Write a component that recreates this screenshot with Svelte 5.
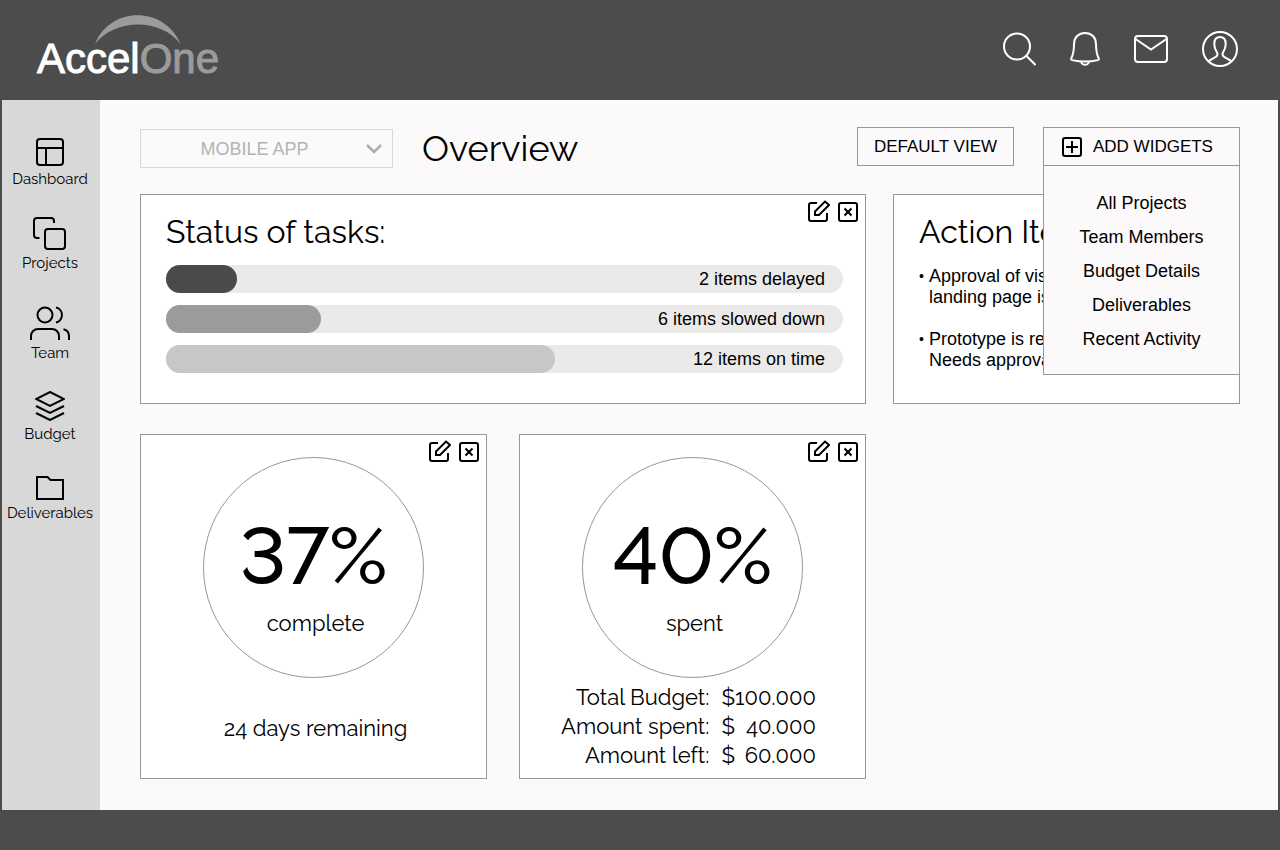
<script lang="ts">
	let project = 'MOBILE APP';
	let menuOpen = true;

	const nav = ['Dashboard', 'Projects', 'Team', 'Budget', 'Deliverables'];
	const widgets = ['All Projects', 'Team Members', 'Budget Details', 'Deliverables', 'Recent Activity'];

	const tasks = [
		{ label: '2 items delayed', width: 10.5, color: '#4a4a4a' },
		{ label: '6 items slowed down', width: 22.9, color: '#9b9b9b' },
		{ label: '12 items on time', width: 57.5, color: '#c7c7c9' }
	];

	const budget = [
		{ label: 'Total Budget:', amount: '100.000' },
		{ label: 'Amount spent:', amount: '40.000' },
		{ label: 'Amount left:', amount: '60.000' }
	];
</script>

{#snippet tools()}
	<div class="tools">
		<button aria-label="Edit widget">
			<svg width="22" height="22" viewBox="0 0 22 22">
				<path d="M9 3H3a2 2 0 0 0-2 2v14a2 2 0 0 0 2 2h14a2 2 0 0 0 2-2v-6" />
				<path d="M7 11.5 17 1.5l4 3.5-10 10H7z" />
			</svg>
		</button>
		<button aria-label="Remove widget">
			<svg width="20" height="20" viewBox="0 0 20 20">
				<rect x="1" y="1" width="18" height="18" rx="2" />
				<path d="M6.5 6.5l7 7M13.5 6.5l-7 7" />
			</svg>
		</button>
	</div>
{/snippet}

<div class="page">
	<header>
		<a class="logo" href="/">
			<svg class="arc" width="86" height="29" viewBox="0 0 86 29">
				<path d="M0 29C15-9.500 70-9.500 85.500 29C66 3 20 3 0 29z" />
			</svg>
			<span class="accel">Accel</span><span class="one">One</span>
		</a>
		<div class="actions">
			<button aria-label="Search">
				<svg width="34" height="34" viewBox="0 0 34 34">
					<circle cx="15" cy="14.500" r="13" />
					<path d="M24 23.500 33.500 33" />
				</svg>
			</button>
			<button aria-label="Notifications">
				<svg width="30" height="34" viewBox="0 0 30 34">
					<path d="M15 1C8.500 1 4 5.500 4 12c0 8-.8 10.500-2.600 14-.5 1.200-.3 1.800.8 2.100C6 29 10.500 29.600 15 29.600s9-.6 12.800-1.500c1.100-.3 1.300-.9.8-2.100C26.800 22.500 26 20 26 12 26 5.500 21.500 1 15 1z" />
					<path d="M11 30c.8 2 2 2.800 4 2.800s3.200-.8 4-2.800" />
				</svg>
			</button>
			<button aria-label="Messages">
				<svg width="34" height="28" viewBox="0 0 34 28">
					<rect x="1" y="1" width="32" height="26" rx="3" />
					<path d="M1.500 4 17 14.500 32.500 4" />
				</svg>
			</button>
			<button aria-label="Account">
				<svg width="36" height="36" viewBox="0 0 36 36">
					<circle cx="18" cy="18" r="17" />
					<path d="M6.500 30.500c2-2.300 5-3.200 7-4.300 1.800-1 2.300-2.400 1.800-4.200-.5-1.700-3-3.500-3-9C12.300 8.500 14.500 6 18 6s5.700 2.500 5.700 7c0 5.500-2.500 7.300-3 9-.5 1.800 0 3.200 1.800 4.200 2 1.100 5 2 7 4.300" />
				</svg>
			</button>
		</div>
	</header>

	<div class="body">
		<nav>
			{#each nav as item}
				<a href="#{item.toLowerCase()}">
					{#if item === 'Dashboard'}
						<svg width="28" height="28" viewBox="0 0 28 28">
							<rect x="1" y="1" width="26" height="26" rx="3" />
							<path d="M1 10h26M10 10v17" />
						</svg>
					{:else if item === 'Projects'}
						<svg width="34" height="33" viewBox="0 0 34 33">
							<rect x="12" y="12" width="20" height="20" rx="3" />
							<path d="M21 6V4a3 3 0 0 0-3-3H4a3 3 0 0 0-3 3v14a3 3 0 0 0 3 3h2.500" />
						</svg>
					{:else if item === 'Team'}
						<svg width="40" height="39" viewBox="0 0 40 39">
							<circle cx="15" cy="14" r="7.500" />
							<path d="M1 39v-4a7 7 0 0 1 7-7h14a7 7 0 0 1 7 7v4" />
							<path d="M26 6.500a7.700 7.700 0 0 1 0 15M33.500 28.300a7 7 0 0 1 5.500 6.700v4" />
						</svg>
					{:else if item === 'Budget'}
						<svg width="30" height="30" viewBox="0 0 30 30">
							<path d="M15 1l14 7-14 7L1 8zM1 15l14 7 14-7M1 22l14 7 14-7" />
						</svg>
					{:else}
						<svg width="28" height="28" viewBox="0 0 28 28">
							<path d="M1 5h10.500l3 3H27v19H1z" />
						</svg>
					{/if}
					<span>{item}</span>
				</a>
			{/each}
		</nav>

		<main>
			<div class="toolbar">
				<div class="picker">
					<select aria-label="Project" bind:value={project}>
						<option>MOBILE APP</option>
					</select>
					<svg width="18" height="12" viewBox="0 0 18 12"><path d="M2 2l7 7 7-7" /></svg>
				</div>
				<h1>Overview</h1>
				<button class="box default">DEFAULT VIEW</button>
				<div class="add">
					<button class="box" aria-expanded={menuOpen} on:click={() => (menuOpen = !menuOpen)}>
						<svg width="20" height="20" viewBox="0 0 20 20">
							<rect x="1" y="1" width="18" height="18" rx="2" />
							<path d="M4 10h12M10 4v12" />
						</svg>
						ADD WIDGETS
					</button>
					{#if menuOpen}
						<ul class="menu">
							{#each widgets as widget}
								<li><button>{widget}</button></li>
							{/each}
						</ul>
					{/if}
				</div>
			</div>

			<div class="board">
				<div class="left">
					<section class="card status">
						{@render tools()}
						<h2>Status of tasks:</h2>
						{#each tasks as task}
							<div class="bar">
								<div class="fill" style="width: {task.width}%; background: {task.color}"></div>
								<span>{task.label}</span>
							</div>
						{/each}
					</section>

					<section class="card metric">
						{@render tools()}
						<div class="circle">
							<strong>37%</strong>
							<span>complete</span>
						</div>
						<p>24 days remaining</p>
					</section>

					<section class="card metric">
						{@render tools()}
						<div class="circle">
							<strong>40%</strong>
							<span>spent</span>
						</div>
						<table>
							<tbody>
								{#each budget as row}
									<tr>
										<th scope="row">{row.label}</th>
										<td>$</td>
										<td>{row.amount}</td>
									</tr>
								{/each}
							</tbody>
						</table>
					</section>
				</div>

				<section class="card items">
					<h2>Action Items:</h2>
					<ul>
						<li>Approval of visuals<br />landing page is due</li>
						<li>Prototype is ready<br />Needs approval</li>
					</ul>
				</section>
			</div>
		</main>
	</div>
	<footer></footer>
</div>

<style>
	:global(body) {
		margin: 0;
	}

	.page {
		--dark: #4c4c4c;
		--line: #979797;
		--bg: #fbf9fa;
		display: flex;
		flex-direction: column;
		min-height: 100vh;
		background: var(--dark);
		color: #000;
		font-family: 'Liberation Sans', Arial, sans-serif;
		font-size: 18px;
	}

	.page * {
		box-sizing: border-box;
	}

	svg {
		display: block;
		flex-shrink: 0;
		fill: none;
		stroke: currentColor;
		stroke-width: 2;
	}

	button {
		padding: 0;
		border: 0;
		background: none;
		color: inherit;
		font: inherit;
		cursor: pointer;
	}

	a {
		color: inherit;
		text-decoration: none;
	}

	ul {
		margin: 0;
		padding: 0;
		list-style: none;
	}

	header {
		display: flex;
		align-items: center;
		justify-content: space-between;
		height: 100px;
		padding: 0 42px 0 37px;
	}

	.logo {
		position: relative;
		padding-top: 18px;
		font-size: 42px;
		line-height: 48px;
	}

	.arc {
		position: absolute;
		top: -2px;
		left: 58px;
		fill: #9b9b9b;
		stroke: none;
	}

	.accel {
		color: #fff;
		-webkit-text-stroke: 1px #fff;
	}

	.one {
		color: #9b9b9b;
		-webkit-text-stroke: 1px #9b9b9b;
	}

	.actions {
		display: flex;
		align-items: center;
		gap: 34px;
		padding-bottom: 2px;
		color: #fff;
	}

	.body {
		display: flex;
		flex: 1;
		margin: 0 2px;
		background: var(--bg);
	}

	nav {
		display: flex;
		flex-direction: column;
		gap: 28px;
		width: 98px;
		flex-shrink: 0;
		padding: 38px 2px 0 0;
		background: #d8d8d8;
		font-family: Raleway, Lato, sans-serif;
		font-size: 15px;
		line-height: 20px;
	}

	nav a {
		display: flex;
		flex-direction: column;
		align-items: center;
		gap: 3px;
	}

	main {
		flex: 1;
		min-width: 0;
		padding: 27px 38px 31px 40px;
	}

	.toolbar {
		display: flex;
		align-items: flex-start;
		gap: 29px;
		height: 67px;
	}

	.picker {
		position: relative;
		width: 253px;
		margin-top: 2px;
	}

	.picker select {
		display: block;
		width: 100%;
		height: 39px;
		padding: 0 24px 0 0;
		border: 1px solid #d8d8d8;
		border-radius: 0;
		appearance: none;
		background: #fbfafa;
		color: #b4b3b3;
		font: inherit;
		text-align-last: center;
	}

	.picker svg {
		position: absolute;
		top: 14px;
		right: 10px;
		color: #adadad;
		stroke-width: 2.5;
		pointer-events: none;
	}

	h1,
	h2 {
		margin: 0;
		font-family: Raleway, Lato, sans-serif;
		font-weight: 400;
	}

	h1 {
		font-size: 36px;
		line-height: 42px;
	}

	.box {
		display: flex;
		align-items: center;
		justify-content: center;
		gap: 11px;
		height: 39px;
		border: 1px solid var(--line);
		font-size: 17px;
	}

	.default {
		width: 157px;
		margin-left: auto;
	}

	.add {
		position: relative;
		width: 197px;
	}

	.add .box {
		justify-content: flex-start;
		width: 100%;
		padding-left: 18px;
	}

	.menu {
		position: absolute;
		top: 38px;
		left: 0;
		z-index: 1;
		width: 100%;
		padding: 20px 0 18px;
		border: 1px solid var(--line);
		background: var(--bg);
	}

	.menu button {
		width: 100%;
		height: 34px;
	}

	.menu li {
		height: 34px;
	}

	.board {
		display: grid;
		grid-template-columns: 726fr 347fr;
		align-items: start;
		gap: 27px;
	}

	.left {
		display: grid;
		grid-template-columns: 1fr 1fr;
		gap: 30px 32px;
	}

	.card {
		position: relative;
		border: 1px solid var(--line);
		background: #fff;
	}

	.tools {
		position: absolute;
		top: 5px;
		right: 7px;
		display: flex;
		align-items: flex-end;
		gap: 8px;
	}

	.status,
	.items {
		min-height: 210px;
		padding: 17px 22px 0 25px;
	}

	.status {
		grid-column: 1 / -1;
	}

	h2 {
		margin-bottom: 13px;
		font-size: 32px;
		line-height: 40px;
	}

	.bar {
		position: relative;
		display: flex;
		align-items: center;
		justify-content: flex-end;
		height: 28px;
		margin-bottom: 12px;
		padding-right: 18px;
		border-radius: 14px;
		background: #ebeae9;
	}

	.fill {
		position: absolute;
		top: 0;
		left: 0;
		height: 100%;
		border-radius: 14px;
	}

	.bar span {
		position: relative;
	}

	.items ul {
		display: grid;
		gap: 21px;
		padding-top: 1px;
	}

	.items li {
		position: relative;
		padding-left: 10px;
		line-height: 21px;
	}

	.items li::before {
		content: '•';
		position: absolute;
		left: 0;
		font-size: 14px;
	}

	.metric {
		display: flex;
		flex-direction: column;
		align-items: center;
		min-height: 345px;
		padding-top: 22px;
		font-family: Raleway, Lato, sans-serif;
		font-size: 22px;
		line-height: 29px;
	}

	.circle {
		display: flex;
		flex-direction: column;
		align-items: center;
		gap: 13px;
		width: 221px;
		height: 221px;
		padding-top: 58px;
		border: 1px solid var(--line);
		border-radius: 50%;
	}

	.circle strong {
		font-size: 80px;
		font-weight: 500;
		font-variant-numeric: lining-nums tabular-nums;
		line-height: 80px;
	}

	.circle span,
	.metric p {
		padding-left: 4px;
	}

	.metric p {
		margin: 36px 0 0;
	}

	table {
		margin: 5px 8px 0 0;
		border-collapse: collapse;
	}

	th,
	td {
		padding: 0;
		font-weight: 400;
		text-align: right;
	}

	th {
		padding-right: 12px;
	}

	footer {
		height: 40px;
	}
</style>
